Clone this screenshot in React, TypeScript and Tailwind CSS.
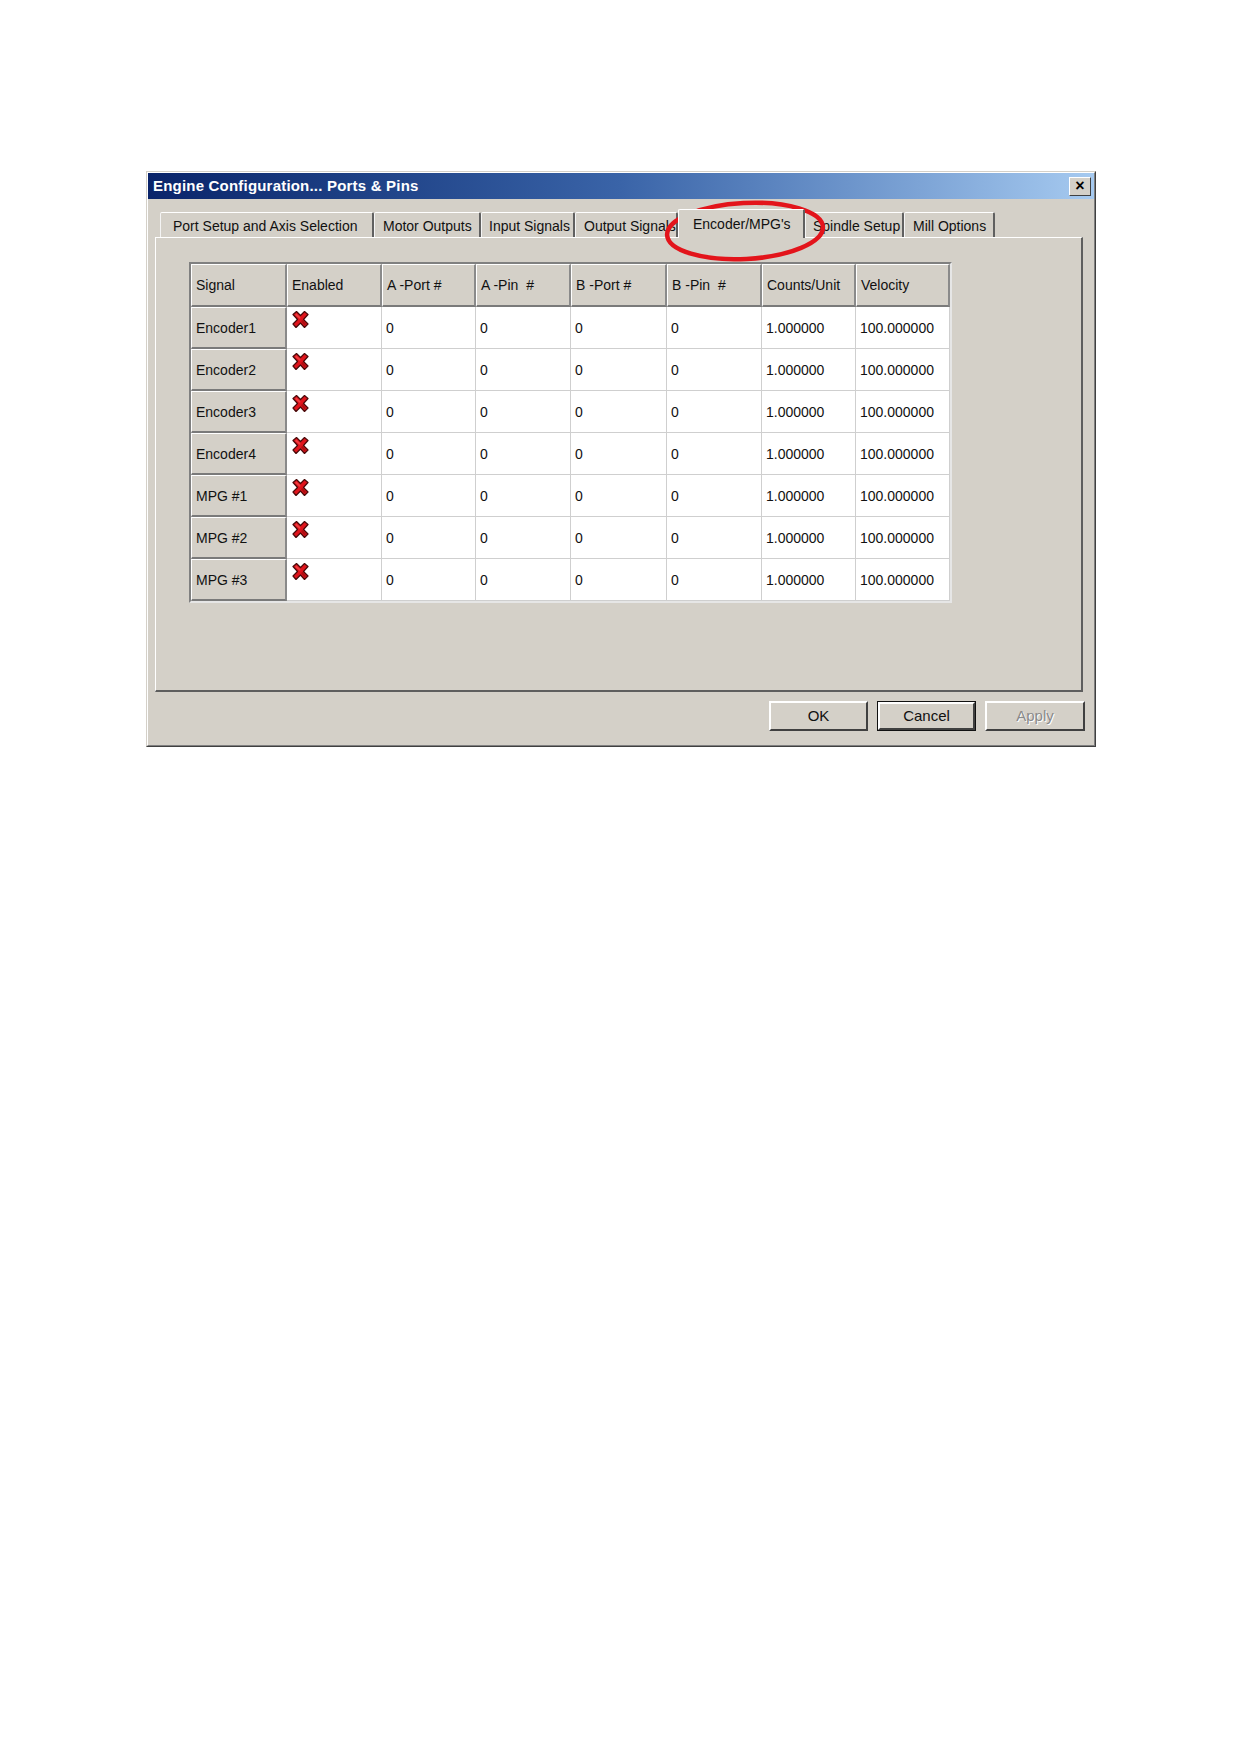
import React from "react";

const headers = ["Signal", "Enabled", "A -Port #", "A -Pin  #", "B -Port #", "B -Pin  #", "Counts/Unit", "Velocity"];
const signals = ["Encoder1", "Encoder2", "Encoder3", "Encoder4", "MPG #1", "MPG #2", "MPG #3"];

const tabs = [
  { label: "Port Setup and Axis Selection", cls: "w-[214px] pl-[12px]" },
  { label: "Motor Outputs", cls: "w-[107px] pl-[8px]" },
  { label: "Input Signals", cls: "w-[94px] pl-[7px]" },
  { label: "Output Signals", cls: "w-[103px] pl-[8px]" },
  { label: "Encoder/MPG's", cls: "w-[127px] pl-[14px]", active: true },
  { label: "Spindle Setup", cls: "w-[99px] pl-[7px]" },
  { label: "Mill Options", cls: "w-[91px] pl-[8px]" },
];

function RedX() {
  return (
    <svg width="17" height="17" viewBox="0 0 17 17">
      <polygon
        points="1,3.5 4.5,0.5 8.5,4.5 12.5,0.5 16,3.5 11.5,8.5 16,13 12.5,16.5 8.5,12 4,16.5 1,13 5.5,8.5"
        fill="#e0141c"
        stroke="#4a0a0a"
        strokeWidth="1.2"
        strokeLinejoin="round"
      />
      <polygon points="3,4 4.5,2.5 8.5,6.5 8,8" fill="#ff5a5a" opacity="0.6" />
      <polygon points="9,10 12.5,14.5 14,13 10.5,9" fill="#8a0a0a" opacity="0.6" />
    </svg>
  );
}

function Btn({ label, variant }: { label: string; variant?: "default" | "disabled" }) {
  const inner = (
    <div className="h-full w-full border-2 border-t-white border-l-white border-r-[#404040] border-b-[#404040] bg-[#d4d0c8] flex items-center justify-center">
      <span
        className={
          variant === "disabled"
            ? "text-[15px] text-[#8a8a8a] [text-shadow:1px_1px_0_#ffffff]"
            : "text-[15px] text-[#111]"
        }
      >
        {label}
      </span>
    </div>
  );
  if (variant === "default") {
    return <div className="w-[99px] h-[30px] border border-[#111]">{inner}</div>;
  }
  return <div className={variant === "disabled" ? "w-[100px] h-[30px]" : "w-[99px] h-[30px]"}>{inner}</div>;
}

export default function App() {
  return (
    <div className="relative min-h-[1754px] w-full bg-white font-['Liberation_Sans',Arial,sans-serif] text-[#111]">
      <div className="pt-[171px] pl-[146px]">
        {/* dialog window */}
        <div className="w-[950px] h-[576px] border border-l-[#d4d0c8] border-t-[#d4d0c8] border-r-[#404040] border-b-[#404040]">
          <div className="h-full w-full border border-l-white border-t-white border-r-[#808080] border-b-[#808080] bg-[#d4d0c8] flex flex-col">
            {/* title bar */}
            <div className="h-[26px] bg-linear-to-r from-[#0a246a] via-[#3a64a8] to-[#a6caf0] flex items-center justify-between pl-[5px] pr-[3px]">
              <span className="text-white font-bold text-[15px] tracking-[0.2px]">Engine Configuration... Ports &amp; Pins</span>
              <div className="w-[22px] h-[19px] bg-[#d4d0c8] border border-t-white border-l-white border-r-[#404040] border-b-[#404040] flex items-center justify-center">
                <span className="text-[16px] font-bold leading-none text-black">×</span>
              </div>
            </div>

            {/* tab strip */}
            <div className="mt-[13px] ml-[12px] h-[25px] flex items-end">
              {tabs.map((t) =>
                t.active ? (
                  <div
                    key={t.label}
                    className={`${t.cls} relative z-10 -mb-[1px] h-[29px] bg-[#d4d0c8] border-t border-l border-t-white border-l-white border-r-2 border-r-[#606060] rounded-t-[2px] flex items-center`}
                  >
                    <span className="text-[14px] whitespace-nowrap">{t.label}</span>
                  </div>
                ) : (
                  <div
                    key={t.label}
                    className={`${t.cls} h-[25px] border-t border-l border-t-white border-l-[#f4f4f4] border-r-2 border-r-[#606060] rounded-t-[2px] flex items-center pt-[3px]`}
                  >
                    <span className="text-[14px] whitespace-nowrap">{t.label}</span>
                  </div>
                )
              )}
            </div>

            {/* tab page */}
            <div className="ml-[7px] w-[928px] h-[455px] border-t border-l border-t-white border-l-white border-r-2 border-b-2 border-r-[#5e5e5e] border-b-[#5e5e5e]">
              <div className="mt-[24px] ml-[33px] w-[763px] border-2 border-t-[#808080] border-l-[#808080] border-r-[#e6e6e6] border-b-[#e6e6e6]">
                <div className="grid grid-cols-[96px_95px_94px_95px_96px_95px_94px_94px]">
                  {headers.map((h) => (
                    <div
                      key={h}
                      className="h-[43px] bg-[#d4d0c8] border-t border-l border-t-white border-l-white border-r-2 border-b-2 border-r-[#8a8a8a] border-b-[#7a7a7a] flex items-center pl-[4px]"
                    >
                      <span className="text-[14px] whitespace-pre">{h}</span>
                    </div>
                  ))}
                  {signals.map((s) => (
                    <React.Fragment key={s}>
                      <div className="h-[42px] bg-[#d4d0c8] border-t border-l border-t-white border-l-white border-r-2 border-b-2 border-r-[#8a8a8a] border-b-[#7a7a7a] flex items-center pl-[4px] pt-[2px]">
                        <span className="text-[14px]">{s}</span>
                      </div>
                      <div className="h-[42px] bg-white border-r border-b border-[#cfcfcf] pl-[5px] pt-[4px]">
                        <RedX />
                      </div>
                      {["0", "0", "0", "0", "1.000000", "100.000000"].map((v, i) => (
                        <div
                          key={i}
                          className="h-[42px] bg-white border-r border-b border-[#cfcfcf] flex items-center pl-[4px] pt-[2px]"
                        >
                          <span className="text-[14px]">{v}</span>
                        </div>
                      ))}
                    </React.Fragment>
                  ))}
                </div>
              </div>
            </div>

            {/* action buttons */}
            <div className="mt-[9px] pr-[9px] flex justify-end gap-[9px]">
              <Btn label="OK" />
              <Btn label="Cancel" variant="default" />
              <Btn label="Apply" variant="disabled" />
            </div>
          </div>
        </div>
      </div>

      {/* hand-drawn highlight ring around the Encoder/MPG's tab */}
      <svg
        className="absolute left-[660px] top-[192px] pointer-events-none"
        width="176"
        height="78"
        viewBox="0 0 176 78"
      >
        <ellipse
          cx="85"
          cy="39"
          rx="78"
          ry="28"
          transform="rotate(-3 85 39)"
          fill="none"
          stroke="#e3141b"
          strokeWidth="4.5"
        />
      </svg>
    </div>
  );
}
